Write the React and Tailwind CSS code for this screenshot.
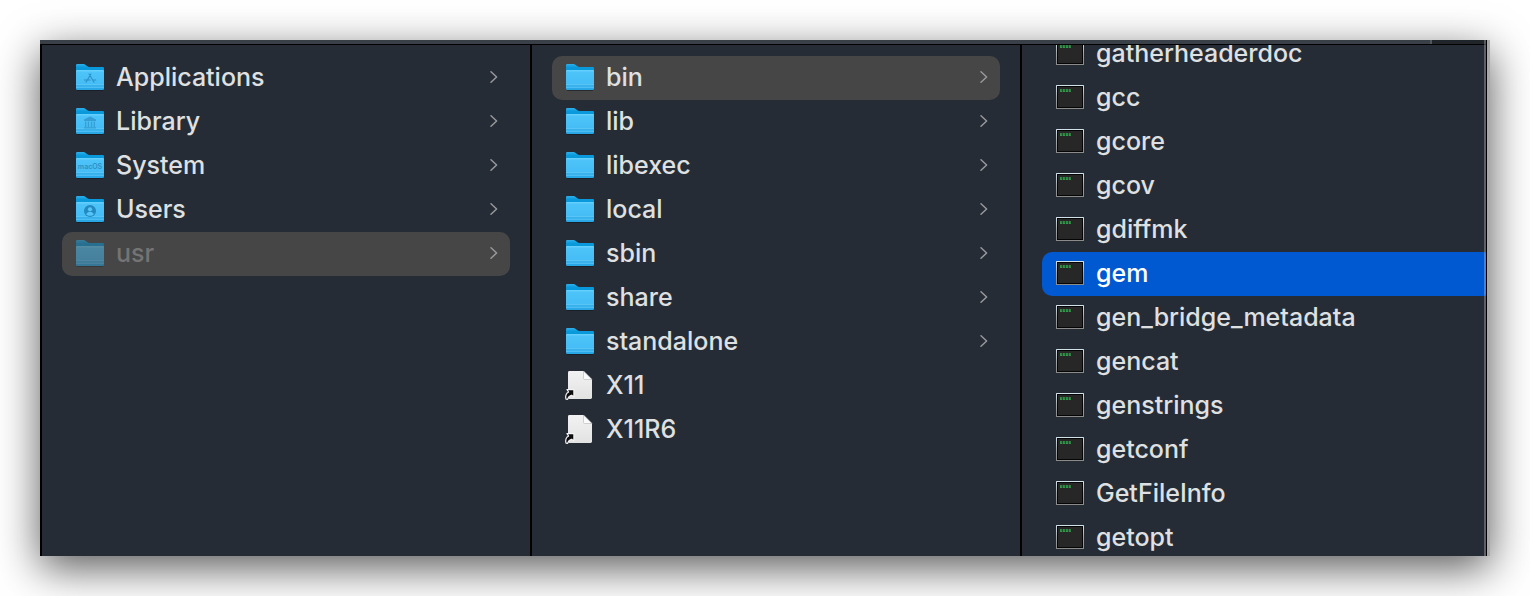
import React, { useState } from 'react';
import clsx from 'clsx';

const ROOT_ITEMS = [
  { name: 'Applications', kind: 'folder', glyph: 'apps' },
  { name: 'Library', kind: 'folder', glyph: 'library' },
  { name: 'System', kind: 'folder', glyph: 'system' },
  { name: 'Users', kind: 'folder', glyph: 'users' },
  { name: 'usr', kind: 'folder', hidden: true },
];

const USR_ITEMS = [
  { name: 'bin', kind: 'folder' },
  { name: 'lib', kind: 'folder' },
  { name: 'libexec', kind: 'folder' },
  { name: 'local', kind: 'folder' },
  { name: 'sbin', kind: 'folder' },
  { name: 'share', kind: 'folder' },
  { name: 'standalone', kind: 'folder' },
  { name: 'X11', kind: 'alias' },
  { name: 'X11R6', kind: 'alias' },
];

const BIN_ITEMS = [
  'gatherheaderdoc',
  'gcc',
  'gcore',
  'gcov',
  'gdiffmk',
  'gem',
  'gen_bridge_metadata',
  'gencat',
  'genstrings',
  'getconf',
  'GetFileInfo',
  'getopt',
].map((name) => ({ name, kind: 'exec' }));

// Gradients shared by every icon
const IconDefs = () => (
  <svg width="0" height="0" className="absolute" aria-hidden="true">
    <defs>
      <linearGradient id="folderFront" x1="0" y1="0" x2="0" y2="1">
        <stop offset="0" stopColor="#6bd3fd" />
        <stop offset="0.12" stopColor="#4dc3f9" />
        <stop offset="0.72" stopColor="#45bdf5" />
        <stop offset="1" stopColor="#25a5e4" />
      </linearGradient>
      <linearGradient id="folderBack" x1="0" y1="0" x2="0" y2="1">
        <stop offset="0" stopColor="#2fb0ea" />
        <stop offset="0.3" stopColor="#0a9adc" />
        <stop offset="1" stopColor="#0495d8" />
      </linearGradient>
      <linearGradient id="execFrame" x1="0" y1="0" x2="0" y2="1">
        <stop offset="0" stopColor="#d3e4ec" />
        <stop offset="0.5" stopColor="#a3a7a9" />
        <stop offset="1" stopColor="#8a8a88" />
      </linearGradient>
      <linearGradient id="paper" x1="0" y1="0" x2="0" y2="1">
        <stop offset="0" stopColor="#f2f2f2" />
        <stop offset="1" stopColor="#e2e2e2" />
      </linearGradient>
    </defs>
  </svg>
);

const FolderGlyph = ({ glyph }) => {
  if (glyph === 'apps') {
    return (
      <g stroke="#2c90c8" strokeWidth="1.1" strokeLinecap="round" fill="none">
        <path d="M14.9 11L10 19.2M13.1 11L18 19.2M8.3 17H14.2M16.8 17H19.7" />
      </g>
    );
  }
  if (glyph === 'library') {
    return (
      <g fill="#369ed5">
        <path d="M14 9.6L20 12.6V14H8V12.6Z" />
        <path d="M9 14.6H10.3V20H9ZM11.8 14.6H13.1V20H11.8ZM14.9 14.6H16.2V20H14.9ZM17.7 14.6H19V20H17.7Z" />
        <path d="M8 20.2H20V21.4H8Z" />
      </g>
    );
  }
  if (glyph === 'system') {
    return (
      <text
        x="14"
        y="18"
        textAnchor="middle"
        fontFamily="Inter, sans-serif"
        fontSize="7"
        fontWeight="600"
        fill="#2c90c8"
      >
        macOS
      </text>
    );
  }
  if (glyph === 'users') {
    return (
      <g>
        <circle cx="14" cy="16" r="6" fill="#2489c1" />
        <circle cx="14" cy="14.3" r="2.1" fill="#55c5f7" />
        <path d="M10.2 19.2C10.8 17.3 12.3 16.9 14 16.9S17.2 17.3 17.8 19.2C16.8 20.3 15.5 20.8 14 20.8S11.2 20.3 10.2 19.2Z" fill="#55c5f7" />
      </g>
    );
  }
  return null;
};

const FolderIcon = ({ glyph, dimmed }) => (
  <svg
    className={clsx('w-7 h-7 shrink-0', dimmed && 'opacity-50')}
    viewBox="0 0 28 28"
    aria-hidden="true"
  >
    <rect x="0.5" y="8" width="27" height="20" rx="1.5" fill="#10151b" opacity="0.55" />
    <path d="M0 2.2Q0 1 1.2 1H7.5Q8.5 1 9.4 1.8L11 3.1Q11.9 3.9 13 3.9H26.8Q28 3.9 28 5.1V12H0Z" fill="url(#folderBack)" />
    <path d="M0 8Q0 7 1 7H27Q28 7 28 8V25.8Q28 27 26.8 27H1.2Q0 27 0 25.8Z" fill="url(#folderFront)" />
    <path d="M0 21.5H28M0 24.5H28" stroke="#77d2fb" strokeWidth="1" opacity="0.4" />
    <path d="M0 22.5H28M0 25.5H28" stroke="#1c95d2" strokeWidth="1" opacity="0.2" />
    <FolderGlyph glyph={glyph} />
  </svg>
);

const AliasIcon = () => (
  <svg className="w-7 h-7 shrink-0 overflow-visible" viewBox="0 0 28 28" aria-hidden="true">
    <path d="M2 1.4Q2 0 3.4 0H17.5L26 8.5V26.6Q26 28 24.6 28H3.4Q2 28 2 26.6Z" fill="url(#paper)" />
    <path d="M17.5 0L26 8.5H18.7Q17.5 8.5 17.5 7.3Z" fill="#fbfbfb" stroke="#b5b5b5" strokeWidth="0.6" />
    <path
      d="M0 28.2C-0.9 24.6 0.4 22.2 2.6 21L1 18.6H7.9V25.8L5.6 24.2C3.4 25 2 26.2 1.6 28.4Z"
      fill="#0c0c0c"
      stroke="#f4f4f4"
      strokeWidth="1.2"
      strokeLinejoin="round"
    />
  </svg>
);

const ExecIcon = () => (
  <svg className="w-7 h-7 shrink-0" viewBox="0 0 28 28" aria-hidden="true">
    <rect x="0" y="2" width="28" height="24" rx="0.6" fill="url(#execFrame)" />
    <rect x="1" y="3" width="26" height="22" fill="#050505" />
    <rect x="2" y="4" width="24" height="20" fill="#272727" />
    <path d="M4 7.5H15" stroke="#2f9a48" strokeWidth="3" strokeDasharray="2.2 0.7" />
    <path d="M4.8 7H15" stroke="#272727" strokeWidth="0.6" strokeDasharray="1 1.9" />
  </svg>
);

const Chevron = () => (
  <svg className="w-2 h-3 shrink-0" viewBox="0 0 8 12" fill="none" aria-hidden="true">
    <path d="M1 0.8L6.6 6L1 11.2" stroke="#96989c" strokeWidth="1.5" strokeLinecap="round" strokeLinejoin="round" />
  </svg>
);

const ItemIcon = ({ item }) => {
  if (item.kind === 'folder') return <FolderIcon glyph={item.glyph} dimmed={item.hidden} />;
  if (item.kind === 'alias') return <AliasIcon />;
  return <ExecIcon />;
};

const Row = ({ item, selected, active, onSelect }) => (
  <li>
    <button
      type="button"
      onClick={() => onSelect(item.name)}
      className={clsx(
        'flex items-center gap-3 w-full h-11 pl-3.5 pr-3 pb-0.5 text-left',
        active ? 'rounded-l-[10px] rounded-r-xs' : 'rounded-[10px]',
        selected && (active ? 'bg-[#0059d1]' : 'bg-[#464646]')
      )}
    >
      <ItemIcon item={item} />
      <span
        className={clsx(
          'flex-1 truncate',
          item.hidden ? 'text-[#747474]' : selected && active ? 'text-white' : 'text-[#dfe0e1]'
        )}
      >
        {item.name}
      </span>
      {item.kind === 'folder' && <Chevron />}
    </button>
  </li>
);

const Column = ({ label, items, selected, active, onSelect, className }) => (
  <div className={clsx('min-w-0 overflow-hidden', className)}>
    <ul aria-label={label}>
      {items.map((item) => (
        <Row
          key={item.name}
          item={item}
          selected={item.name === selected}
          active={active}
          onSelect={onSelect}
        />
      ))}
    </ul>
  </div>
);

const App = () => {
  const [rootSelected, setRootSelected] = useState('usr');
  const [usrSelected, setUsrSelected] = useState('bin');
  const [binSelected, setBinSelected] = useState('gem');

  return (
    <div className="h-screen p-10 bg-white font-['Inter','Liberation_Sans',sans-serif] text-[25px] leading-8 font-medium">
      <IconDefs />
      <div className="flex h-full shadow-[0_12px_40px_rgba(0,0,0,0.65)]">
        <main className="relative flex flex-col flex-1 min-w-0 bg-[#262c35]">
          {/* Bottom edge of the toolbar */}
          <div className="flex h-[5px] shrink-0 border-b border-black bg-[#3a4047]">
            <div className="flex-1" />
            <div className="w-14 border-l-2 border-[#53585e] bg-[#1f2529]" />
          </div>

          {/* Columns */}
          <div className="grid grid-cols-[490fr_490fr_464fr] flex-1 min-h-0 border-l-2 border-black">
            <Column
              label="Root"
              items={ROOT_ITEMS}
              selected={rootSelected}
              onSelect={setRootSelected}
              className="px-5 pt-[11px] border-r-2 border-black"
            />
            <Column
              label="usr"
              items={USR_ITEMS}
              selected={usrSelected}
              onSelect={setUsrSelected}
              className="px-5 pt-[11px] border-r-2 border-black"
            />
            {/* This list is scrolled part way through a row */}
            <Column
              label="bin"
              items={BIN_ITEMS}
              selected={binSelected}
              onSelect={setBinSelected}
              active
              className="pl-5 [&>ul]:-mt-[13px]"
            />
          </div>

          {/* Highlight along the window edge */}
          <div className="absolute inset-y-0 right-0 w-0.5 bg-white/25 pointer-events-none" />
        </main>
        <div className="w-1 border-l border-black bg-[#a8a8a8]" />
      </div>
    </div>
  );
};

export default App;
